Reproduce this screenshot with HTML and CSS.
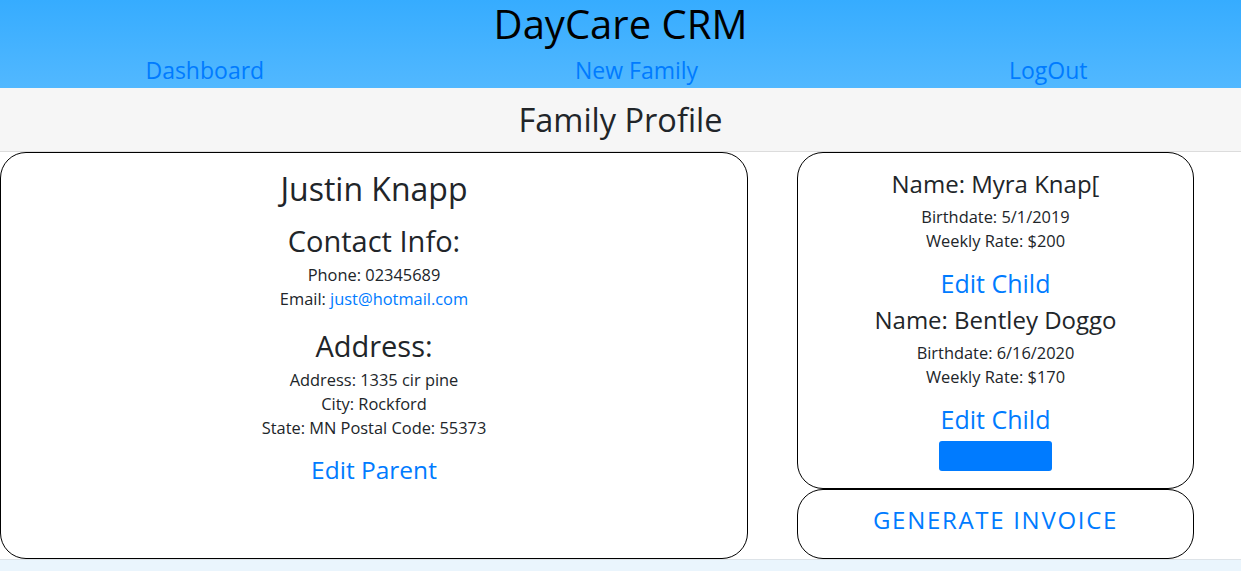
FILE: index.html
```html
<!DOCTYPE html>
<html lang="en">
<head>
<meta charset="utf-8">
<title>DayCare CRM</title>
<link rel="stylesheet" href="styles.css">
</head>
<body>
<header class="topbar">
  <h1 class="brand">DayCare CRM</h1>
  <nav class="nav">
    <a class="nav-link" href="#">Dashboard</a>
    <a class="nav-link" href="#">New Family</a>
    <a class="nav-link" href="#">LogOut</a>
  </nav>
</header>
<div class="subbar">
  <h2 class="page-title">Family Profile</h2>
</div>
<main class="content">
  <section class="card parent">
    <h2 class="parent-name">Justin Knapp</h2>
    <h3 class="section-title">Contact Info:</h3>
    <p class="line">Phone: 02345689</p>
    <p class="line">Email: <a class="link" href="#">just@hotmail.com</a></p>
    <h3 class="section-title addr">Address:</h3>
    <p class="line">Address: 1335 cir pine</p>
    <p class="line">City: Rockford</p>
    <p class="line">State: MN Postal Code: 55373</p>
    <a class="edit-link" href="#">Edit Parent</a>
  </section>
  <div class="side">
    <section class="card children">
      <div class="child">
        <h3 class="child-name">Name: Myra Knap[</h3>
        <p class="small">Birthdate: 5/1/2019</p>
        <p class="small">Weekly Rate: $200</p>
        <a class="edit-link child-edit" href="#">Edit Child</a>
      </div>
      <div class="child">
        <h3 class="child-name">Name: Bentley Doggo</h3>
        <p class="small">Birthdate: 6/16/2020</p>
        <p class="small">Weekly Rate: $170</p>
        <a class="edit-link child-edit" href="#">Edit Child</a>
      </div>
      <button class="add-btn" type="button"></button>
    </section>
    <section class="card invoice">
      <a class="invoice-link" href="#">GENERATE INVOICE</a>
    </section>
  </div>
</main>
<div class="footer-strip"></div>
</body>
</html>
```

FILE: styles.css
```css
* { box-sizing: border-box; }
html, body { margin: 0; padding: 0; }
body {
  font-family: "Comic Sans MS", "Open Sans", sans-serif;
  color: #212529;
  background: #eaf5fd;
  font-size: 16px;
  overflow-x: hidden;
}
a { color: #007bff; text-decoration: none; }

.topbar {
  height: 88px;
  background: linear-gradient(#36acff, #52b8ff);
  display: flex;
  flex-direction: column;
  overflow: hidden;
}
.brand {
  margin: 0;
  height: 46px;
  padding-top: 1px;
  line-height: 46px;
  font-size: 40px;
  font-weight: 400;
  text-align: center;
  color: #000;
}
.nav {
  flex: 1;
  display: flex;
  justify-content: space-around;
  align-items: center;
  padding-top: 6px;
  margin: 0 -2px 0 -10px;
}
.nav-link { font-size: 23px; line-height: 30px; }

.subbar {
  height: 64px;
  background: #f6f6f6;
  border-bottom: 1px solid #dcdcdc;
  display: flex;
  align-items: center;
  justify-content: center;
}
.page-title {
  margin: 0;
  font-size: 32.5px;
  font-weight: 400;
  line-height: 40px;
}

.content {
  background: #fff;
  display: grid;
  grid-template-columns: 748px 397px;
  column-gap: 49px;
  border-bottom: 1px solid #dde3e8;
}
.card {
  border: 1px solid #000;
  border-radius: 26px;
  text-align: center;
  background: #fff;
}
.parent {
  height: 407px;
  padding-top: 16px;
}
.parent-name {
  margin: 0;
  font-size: 32px;
  font-weight: 400;
  line-height: 40px;
}
.section-title {
  margin: 15px 0 5px;
  font-size: 29px;
  font-weight: 400;
  line-height: 34px;
}
.section-title.addr { margin-top: 18px; }
.line { margin: 0; font-size: 16.4px; line-height: 24px; }
.link { color: #007bff; }
.edit-link {
  display: block;
  margin-top: 15px;
  font-size: 24.5px;
  line-height: 30px;
}
.child-edit { font-size: 25px; }

.side { display: flex; flex-direction: column; }
.children {
  height: 337px;
  padding: 16px 0 17px;
  display: flex;
  flex-direction: column;
  align-items: center;
}
.child { width: 100%; }
.child + .child { margin-top: 7px; }
.child-name {
  margin: 0 0 6px;
  font-size: 24px;
  font-weight: 400;
  line-height: 30px;
}
.small { margin: 0; font-size: 16.4px; line-height: 24px; }
.add-btn {
  margin-top: 7px;
  width: 113px;
  height: 30px;
  border: 0;
  border-radius: 3px;
  background: #007bff;
}
.invoice {
  height: 70px;
  padding-top: 15px;
}
.invoice-link {
  display: block;
  font-size: 24px;
  line-height: 30px;
  letter-spacing: 1.7px;
}
.footer-strip { height: 20px; }
```
